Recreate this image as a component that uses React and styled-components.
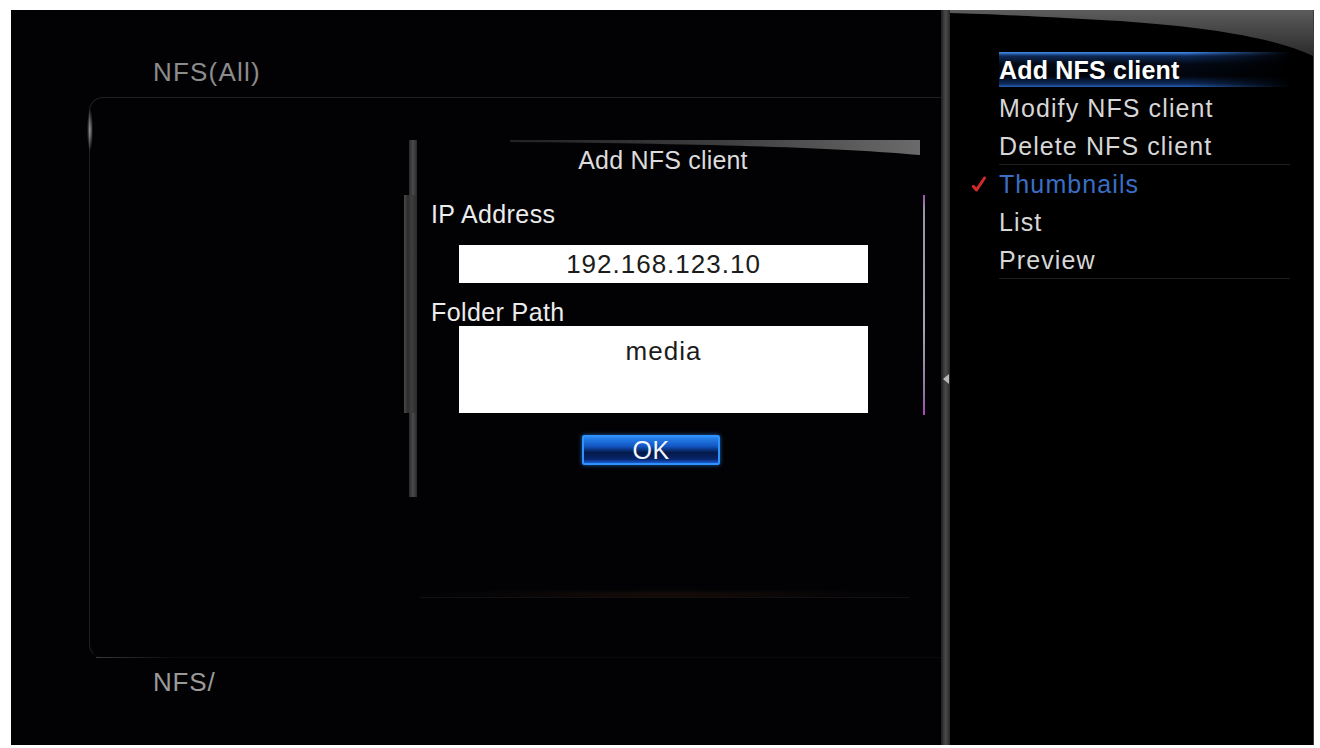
import React from "react";
import styled, { createGlobalStyle } from "styled-components";

const GlobalStyle = createGlobalStyle`
  html, body {
    margin: 0;
    padding: 0;
    background: #fff;
  }
  body {
    font-family: "Liberation Sans", Arial, sans-serif;
  }
`;

const Screen = styled.div`
  margin: 10px 0 0 11px;
  width: 1303px;
  height: 735px;
  display: flex;
  background: #000;
  border-right: 1px solid #3a3a3a;
  box-sizing: border-box;
  overflow: hidden;
`;

const Browser = styled.div`
  width: 930px;
  display: flex;
  flex-direction: column;
  padding-top: 47px;
  box-sizing: border-box;
  background: #020204;
`;

const Caption = styled.div`
  margin-left: 142px;
  font-size: 26px;
  line-height: 30px;
  letter-spacing: 1.2px;
  color: ${(p) => p.$color || "#8c8c8c"};
`;

const Frame = styled.div`
  position: relative;
  margin: 10px 0 0 78px;
  height: 561px;
  box-sizing: border-box;
  border: 1px solid #202020;
  border-right: none;
  border-bottom-color: rgba(255, 255, 255, 0.03);
  border-radius: 14px 0 0 14px;
  padding: 42px 0 0 314px;
  display: flex;
  flex-direction: column;

  &::before {
    content: "";
    position: absolute;
    left: -3px;
    top: 10px;
    width: 6px;
    height: 44px;
    background: radial-gradient(ellipse at center, rgba(255, 255, 255, 0.55), rgba(255, 255, 255, 0) 70%);
  }
  &::after {
    content: "";
    position: absolute;
    left: 6px;
    bottom: -1px;
    width: 80px;
    height: 1px;
    background: linear-gradient(90deg, #3a3a3a, rgba(58, 58, 58, 0));
  }
`;

const Dialog = styled.div`
  width: 522px;
  height: 357px;
  display: flex;
  flex-shrink: 0;
`;

const Rail = styled.div`
  width: 13px;
  display: flex;
  flex-direction: column;
  align-items: flex-end;
`;

const RailPart = styled.div`
  width: ${(p) => (p.$wide ? "13px" : "8px")};
  height: ${(p) => p.$h}px;
  background: ${(p) =>
    p.$wide
      ? "linear-gradient(90deg, #4a4a4a 0, #2c2c2c 30%, #3e3e3e 60%, #2a2a2a 100%)"
      : "linear-gradient(90deg, #2a2a2a, #4a4a4a 50%, #2a2a2a)"};
`;

const DialogBody = styled.div`
  position: relative;
  flex: 1;
  display: flex;
`;

const Wedge = styled.svg`
  position: absolute;
  top: 0;
  left: 93px;
  right: 4px;
  height: 16px;
`;

const DialogContent = styled.div`
  flex: 1;
  display: flex;
  flex-direction: column;
  padding-top: 5px;
`;

const DialogTitle = styled.div`
  text-align: center;
  padding-right: 14px;
  font-size: 25px;
  line-height: 30px;
  color: #dcdcdc;
  letter-spacing: 0.2px;
`;

const FieldLabel = styled.div`
  margin: ${(p) => p.$gap}px 0 0 14px;
  font-size: 25px;
  line-height: 28px;
  letter-spacing: 0.4px;
  color: #ececec;
`;

const Field = styled.div`
  margin: ${(p) => p.$gap}px 0 0 42px;
  width: 409px;
  height: ${(p) => (p.$tall ? 87 : 38)}px;
  box-sizing: border-box;
  padding-top: ${(p) => (p.$tall ? 10 : 0)}px;
  background: #fff;
  color: #1c1c1c;
  text-align: center;
  font-size: 26px;
  line-height: ${(p) => (p.$tall ? 30 : 38)}px;
  letter-spacing: 1px;
`;

const OkButton = styled.div`
  margin: 22px 0 0 165px;
  width: 138px;
  height: 30px;
  box-sizing: border-box;
  border: 2px solid #2f93ff;
  border-radius: 2px;
  box-shadow: 0 0 4px rgba(40, 140, 255, 0.7);
  background: linear-gradient(180deg, #2a86f0 0%, #1257c4 35%, #041a4a 60%, #07256a 85%, #1a5ad0 100%);
  color: #f2f6ff;
  text-align: center;
  font-size: 25px;
  line-height: 26px;
  letter-spacing: 0.5px;
`;

const Track = styled.div`
  width: 2px;
  height: 220px;
  margin: 55px 1px 0 0;
  background: linear-gradient(180deg, #a050b0 0%, #9a90a8 6%, #a8a2b0 60%, #8a78a0 90%, #b040c0 100%);
`;

const Reflection = styled.div`
  margin: 92px 0 0 16px;
  width: 490px;
  height: 8px;
  background: radial-gradient(ellipse at 50% 70%, rgba(120, 60, 30, 0.18), rgba(60, 40, 30, 0.06) 55%, rgba(0, 0, 0, 0) 75%);
  border-bottom: 1px solid rgba(70, 60, 55, 0.25);
`;

const Footer = styled(Caption)`
  margin-top: 9px;
  letter-spacing: 0.8px;
`;

const Divider = styled.div`
  width: 9px;
  display: flex;
  flex-direction: column;
  align-items: center;
  padding-top: 364px;
  box-sizing: border-box;
  background: linear-gradient(90deg, #1c1c1c 0, #3e3e3e 35%, #4a4a4a 55%, #262626 100%);
`;

const Pointer = styled.div`
  width: 0;
  height: 0;
  border-top: 5px solid transparent;
  border-bottom: 5px solid transparent;
  border-right: 6px solid #b8b8b8;
`;

const Panel = styled.div`
  position: relative;
  flex: 1;
  display: flex;
  flex-direction: column;
`;

const Swoosh = styled.svg`
  position: absolute;
  top: 0;
  right: 0;
  width: 363px;
  height: 48px;
`;

const Menu = styled.ul`
  position: relative;
  list-style: none;
  margin: 0;
  padding: 41px 0 0 0;
`;

const MenuItem = styled.li`
  display: flex;
  height: 38px;
`;

const Mark = styled.div`
  width: 49px;
  box-sizing: border-box;
  padding-right: 13px;
  display: flex;
  justify-content: flex-end;
  align-items: center;
`;

const MenuLabel = styled.div`
  position: relative;
  isolation: isolate;
  flex: 1;
  margin-right: 23px;
  font-size: 25px;
  line-height: 38px;
  letter-spacing: ${(p) => (p.$active ? "0.2px" : "1.1px")};
  font-weight: ${(p) => (p.$active ? 700 : 400)};
  color: ${(p) => (p.$checked ? "#3a6ec4" : p.$active ? "#ffffff" : "#d6d6d6")};
  box-shadow: ${(p) => (p.$divider ? "inset 0 -1px 0 rgba(255, 255, 255, 0.12)" : "none")};

  &::before {
    content: "";
    display: ${(p) => (p.$active ? "block" : "none")};
    position: absolute;
    inset: 1px 0 2px 0;
    z-index: -1;
    background: linear-gradient(
      180deg,
      rgba(70, 150, 255, 0.95) 0,
      rgba(30, 90, 190, 0.45) 4px,
      rgba(8, 25, 60, 0.35) 12px,
      rgba(5, 15, 40, 0.3) 24px,
      rgba(25, 80, 170, 0.55) 32px,
      rgba(50, 120, 230, 0.8) 100%
    );
    -webkit-mask-image: linear-gradient(90deg, #000 0, #000 65%, rgba(0, 0, 0, 0) 100%);
    mask-image: linear-gradient(90deg, #000 0, #000 65%, rgba(0, 0, 0, 0) 100%);
  }
`;

const menu = [
  { label: "Add NFS client", active: true },
  { label: "Modify NFS client" },
  { label: "Delete NFS client", divider: true },
  { label: "Thumbnails", checked: true },
  { label: "List" },
  { label: "Preview", divider: true },
];

function CheckMark() {
  return (
    <svg width="14" height="16" viewBox="0 0 14 16">
      <path d="M1.5 10.5 L4.5 14 L12.5 2" fill="none" stroke="#d42a2a" strokeWidth="3" strokeLinecap="round" strokeLinejoin="round" />
    </svg>
  );
}

export default function App() {
  return (
    <>
      <GlobalStyle />
      <Screen>
        <Browser>
          <Caption>NFS(All)</Caption>
          <Frame>
            <Dialog>
              <Rail>
                <RailPart $h={55} />
                <RailPart $h={218} $wide />
                <RailPart $h={84} />
              </Rail>
              <DialogBody>
                <Wedge viewBox="0 0 410 16" preserveAspectRatio="none">
                  <defs>
                    <linearGradient id="wedgeFill" x1="0" y1="0" x2="1" y2="0">
                      <stop offset="0" stopColor="#222" />
                      <stop offset="0.5" stopColor="#3c3c3c" />
                      <stop offset="1" stopColor="#6a6a6a" />
                    </linearGradient>
                  </defs>
                  <path d="M0 0 H410 V15 C330 8 220 4 0 2 Z" fill="url(#wedgeFill)" />
                </Wedge>
                <DialogContent>
                  <DialogTitle>Add NFS client</DialogTitle>
                  <FieldLabel $gap={25}>IP Address</FieldLabel>
                  <Field $gap={17}>192.168.123.10</Field>
                  <FieldLabel $gap={15}>Folder Path</FieldLabel>
                  <Field $gap={0} $tall>media</Field>
                  <OkButton>OK</OkButton>
                </DialogContent>
                <Track />
              </DialogBody>
            </Dialog>
            <Reflection />
          </Frame>
          <Footer $color="#9a9a9a">NFS/</Footer>
        </Browser>
        <Divider>
          <Pointer />
        </Divider>
        <Panel>
          <Swoosh viewBox="0 0 363 48" preserveAspectRatio="none">
            <defs>
              <linearGradient id="swooshFill" x1="0" y1="0" x2="0" y2="1">
                <stop offset="0" stopColor="#5c5c5c" />
                <stop offset="1" stopColor="#2a2a2a" />
              </linearGradient>
            </defs>
            <path d="M0 0 H363 V46 C330 30 270 18 170 11 C100 7 40 4 0 3 Z" fill="url(#swooshFill)" />
          </Swoosh>
          <Menu>
            {menu.map((item) => (
              <MenuItem key={item.label}>
                <Mark>{item.checked && <CheckMark />}</Mark>
                <MenuLabel $active={item.active} $checked={item.checked} $divider={item.divider}>
                  {item.label}
                </MenuLabel>
              </MenuItem>
            ))}
          </Menu>
        </Panel>
      </Screen>
    </>
  );
}
